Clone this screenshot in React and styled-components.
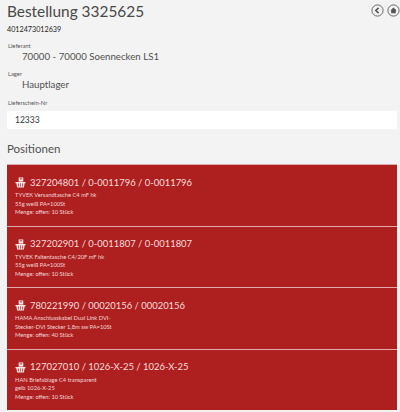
import React from "react";
import styled, { createGlobalStyle } from "styled-components";

const Global = createGlobalStyle`
  html, body { margin: 0; padding: 0; background: #f3f3f3; }
  body { font-family: Lato, "Open Sans", sans-serif; color: #3c3c3c; overflow: hidden; }
`;
const Page = styled.div`
  width: 400px; height: 412px; box-sizing: border-box; padding: 0 3px 0 7px; overflow: hidden;
`;
const Header = styled.header`
  display: flex; justify-content: space-between; align-items: flex-start; height: 25px;
`;
const Title = styled.h1`
  margin: 0; font-size: 15.4px; line-height: 23px; font-weight: 400; color: #484848; white-space: nowrap;
`;
const Nav = styled.div`
  display: flex; gap: 3px; margin-top: 4px; margin-right: -3px;
`;
const Code = styled.div`
  font-size: 7.2px; line-height: 10px; color: #222;
`;
const FieldLabel = styled.div`
  font-size: 5.8px; line-height: 8px; color: #555; margin-left: 1px;
`;
const Field = styled.div`
  margin-top: ${p => p.$top}px;
`;
const FieldValue = styled.div`
  font-size: 9.7px; line-height: 13px; color: #505050; margin-left: 15px;
`;
const InputBox = styled.div`
  background: #fff; height: 18px; line-height: 18px; font-size: 8.5px; color: #333;
  padding-left: 8px; margin-top: 4px;
`;
const Section = styled.h2`
  margin: 12px 0 0; font-size: 11.5px; line-height: 15px; font-weight: 400; color: #505050;
`;
const List = styled.div`
  margin-top: 8px; display: flex; flex-direction: column;
`;
const Card = styled.div`
  background: #ae2020; border-top: 1.5px solid #e2aaaa; box-sizing: border-box; height: 61.5px; padding: 9px 8px 0; color: #fff;
`;
const CardHead = styled.div`
  display: flex; align-items: center; gap: 4px; height: 17px;
`;
const CardTitle = styled.span`
  font-size: 9.45px; line-height: 14px; font-weight: 400; color: #f6dcdc; white-space: nowrap;
`;
const CardLine = styled.div`
  font-size: 5.75px; line-height: 8.7px; color: #f3d5d5; white-space: nowrap;
`;

const Basket = () => (
  <svg width="11" height="11" viewBox="0 0 12 12" fill="#f6e8e8" aria-hidden="true">
    <rect x="4" y="0.5" width="5" height="4.5" />
    <rect x="5.3" y="1.5" width="2.5" height="1" fill="#ae2020" />
    <path d="M0.5 5.5h11v1.2h-1l-.8 4.8H2.3L1.5 6.7h-1z" />
    <path d="M3.7 7v3.5M6 7v3.5M8.3 7v3.5" stroke="#ae2020" strokeWidth="0.8" fill="none" />
  </svg>
);
const Round = ({ children }) => (
  <svg width="13" height="13" viewBox="0 0 13 13" aria-hidden="true">
    <circle cx="6.5" cy="6.5" r="5.6" fill="none" stroke="#666" strokeWidth="1" />
    {children}
  </svg>
);

const items = [
  { t: "327204801 / 0-0011796 / 0-0011796", l: ["TYVEK Versandtasche C4 mF hk", "55g weiß PA=100St", "Menge: offen: 10 Stück"] },
  { t: "327202901 / 0-0011807 / 0-0011807", l: ["TYVEK Faltentasche C4/20F mF hk", "55g weiß PA=100St", "Menge: offen: 10 Stück"] },
  { t: "780221990 / 00020156 / 00020156", l: ["HAMA Anschlusskabel Dual Link DVI-", "Stecker-DVI Stecker 1,8m sw PA=10St", "Menge: offen: 40 Stück"] },
  { t: "127027010 / 1026-X-25 / 1026-X-25", l: ["HAN Briefablage C4 transparent", "gelb 1026-X-25", "Menge: offen: 10 Stück"] },
];

export default function App() {
  return (
    <Page>
      <Global />
      <Header>
        <Title>Bestellung 3325625</Title>
        <Nav>
          <Round><path d="M7.6 3.8 4.8 6.5l2.8 2.7" fill="none" stroke="#555" strokeWidth="1.6" /></Round>
          <Round><path d="M6.5 3.4 9.6 6.4H8.8v2.8H4.2V6.4H3.4z" fill="#555" /></Round>
        </Nav>
      </Header>
      <Code>4012473012639</Code>
      <Field $top={7}>
        <FieldLabel>Lieferant</FieldLabel>
        <FieldValue>70000 - 70000 Soennecken LS1</FieldValue>
      </Field>
      <Field $top={7}>
        <FieldLabel>Lager</FieldLabel>
        <FieldValue>Hauptlager</FieldValue>
      </Field>
      <Field $top={8}>
        <FieldLabel>Lieferschein-Nr</FieldLabel>
        <InputBox>12333</InputBox>
      </Field>
      <Section>Positionen</Section>
      <List>
        {items.map(it => (
          <Card key={it.t}>
            <CardHead><Basket /><CardTitle>{it.t}</CardTitle></CardHead>
            {it.l.map(x => <CardLine key={x}>{x}</CardLine>)}
          </Card>
        ))}
      </List>
    </Page>
  );
}
